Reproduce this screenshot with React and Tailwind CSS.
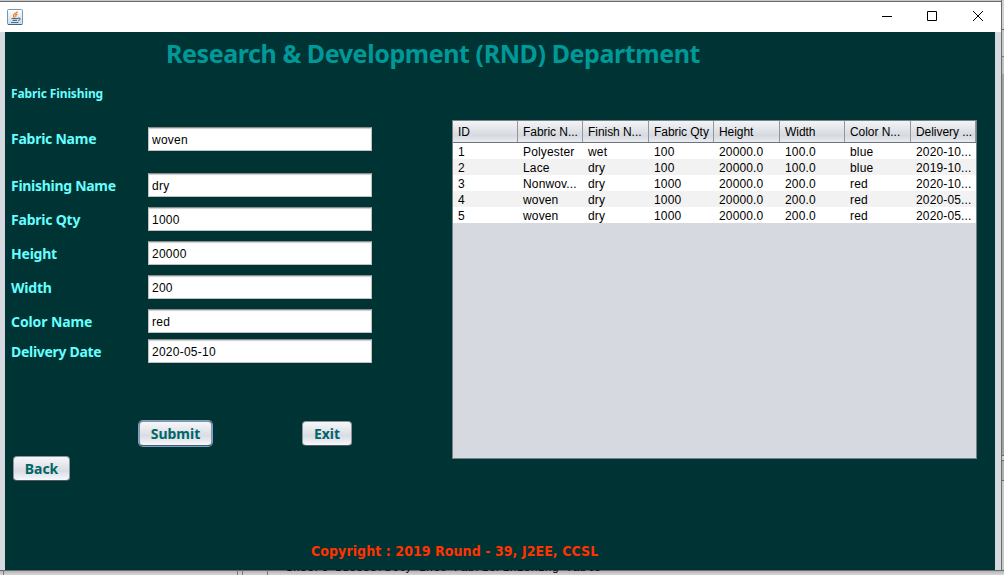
import React from "react";

const fields = [
  ["Fabric Name", "woven", "mt-0", "tracking-[-0.25px]"],
  ["Finishing Name", "dry", "mt-[22px]", "tracking-[-0.29px] pt-[2px]"],
  ["Fabric Qty", "1000", "mt-[10px]", "tracking-[-0.22px] pt-[2px]"],
  ["Height", "20000", "mt-[10px]", "tracking-[-0.22px] pt-[2px]"],
  ["Width", "200", "mt-[10px]", "tracking-[-0.2px] pt-[2px]"],
  ["Color Name", "red", "mt-[10px]", "tracking-[-0.1px] pt-[2px]"],
  ["Delivery Date", "2020-05-10", "mt-[6px]", "tracking-[-0.3px] pt-[2px]"],
];
const heads = ["ID", "Fabric N...", "Finish N...", "Fabric Qty", "Height", "Width", "Color N...", "Delivery ..."];
const rows = [
  ["1", "Polyester", "wet", "100", "20000.0", "100.0", "blue", "2020-10..."],
  ["2", "Lace", "dry", "100", "20000.0", "100.0", "blue", "2019-10..."],
  ["3", "Nonwov...", "dry", "1000", "20000.0", "200.0", "red", "2020-10..."],
  ["4", "woven", "dry", "1000", "20000.0", "200.0", "red", "2020-05..."],
  ["5", "woven", "dry", "1000", "20000.0", "200.0", "red", "2020-05..."],
];
const cols = "grid grid-cols-[65px_65px_66px_65px_66px_65px_66px_65px]";
const bold = "font-['Noto_Sans','Open_Sans',sans-serif] font-bold whitespace-nowrap";

function Button({ children, className }) {
  return (
    <button className={`${bold} flex items-center justify-center rounded-[4px] border border-[#8f9499] border-b-[#55595e] bg-linear-to-b from-[#f6f7f9] via-[#d9dce2] via-60% to-[#f5f8fd] text-[14px] leading-none text-[#006666] ${className}`}>
      {children}
    </button>
  );
}

function JavaIcon() {
  return (
    <svg width="16" height="16" viewBox="0 0 16 16" fill="none">
      <defs>
        <linearGradient id="tile" x1="0" y1="0" x2="0" y2="1">
          <stop offset="0" stopColor="#ffffff" />
          <stop offset="1" stopColor="#cdd9e4" />
        </linearGradient>
      </defs>
      <rect x=".5" y=".5" width="15" height="15" rx="1" fill="url(#tile)" stroke="#7c98b0" />
      <path d="M1 15.5h14" stroke="#45647f" />
      <path d="M10.500 2.500C10 4.300 6.300 4.800 6.500 6.800c.1.800.8 1.200 1 2M10.500 5.200C8.300 6 8.500 7 9 8" stroke="#e8832a" strokeWidth="1.300" />
      <path d="M4.500 9.500h6.500M5.500 11.400h4.500M4 13.500h7.500M11 9.300c2.800-.8 2.800 1.700 0 2.200" stroke="#44708f" strokeWidth="1.100" />
    </svg>
  );
}

export default function App() {
  return (
    <div className="relative flex h-[575px] w-[1004px] flex-col overflow-hidden bg-[#c8c8c8] font-['Liberation_Sans',Arial,sans-serif] text-black">
      <div className="flex h-[570px]">
        <div className="flex w-[1002px] flex-col border-r border-[#6b6b6b]">
          <div className="h-px shrink-0 bg-[#c8c8c8]" />
          <header className="flex h-[31px] shrink-0 items-center border-t border-[#6b6b6b] bg-white pl-[7px]">
            <div className="-mt-px"><JavaIcon /></div>
            <svg className="ml-auto mr-[16px]" width="104" height="14" viewBox="0 0 104 14" fill="none" stroke="#000">
              <path d="M1 6.500h10" />
              <path d="M46.500 1.500h9v9h-9z" />
              <path d="m92 1 10 10M102 1 92 11" />
            </svg>
          </header>
          <div className="flex h-[538px] border-x-[6px] border-l-[5px] border-[#d6d9df] bg-[#003333]">
            <main className="flex w-[990px] flex-col">
              <h1 className={`${bold} ml-[161px] mt-[8px] h-[28px] text-[25px] leading-[26px] tracking-[-0.41px] text-[#009999]`}>
                <span>Research &amp; Development (RND) Department</span>
              </h1>
              <div className="flex h-[413px]">
                <section className="w-[447px] pl-[6px] pt-[17px]">
                  <h2 className={`${bold} h-[16px] text-[12px] leading-[18px] tracking-[-0.12px] text-[#66ffff]`}><span>Fabric Finishing</span></h2>
                  <div className="mt-[26px]">
                    {fields.map(([label, value, gap, track]) => (
                      <div key={label} className={`flex h-[24px] items-center ${gap}`}>
                        <label className={`${bold} ${track} w-[137px] text-[14px] leading-[24px] text-[#66ffff]`}><span>{label}</span></label>
                        <input readOnly value={value} className="h-[24px] w-[224px] border border-[#c0c0c0] border-t-[#8c8c8c] bg-white px-[3px] pt-[2px] text-[12px] tracking-[0.25px] shadow-[inset_0_1px_1px_#cfcfcf] outline-none" />
                      </div>
                    ))}
                  </div>
                  <div className="mt-[58px] flex h-[25px] items-center">
                    <Button className="ml-[128px] h-[25px] w-[73px] shadow-[0_0_0_1px_#73a4d1]">Submit</Button>
                    <Button className="ml-[90px] h-[25px] w-[50px]">Exit</Button>
                  </div>
                  <Button className="ml-[2px] mt-[10px] h-[25px] w-[57px]">Back</Button>
                </section>
                <section className="mt-[52px] h-[339px] w-[525px] border border-[#7b7f86] bg-[#d6d9df] text-[12px]">
                  <div className={`${cols} h-[22px] border-b border-[#6f737a] bg-linear-to-b from-[#f3f4f6] via-[#d6d9df] via-70% to-[#e9ecf1]`}>
                    {heads.map((h) => <div key={h} className="h-[21px] border-r border-[#93979d] pl-[5px] leading-[23px] tracking-[-0.05px] whitespace-nowrap">{h}</div>)}
                  </div>
                  {rows.map((r) => (
                    <div key={r[0]} className={`${cols} h-[16px] leading-[19px] even:bg-white odd:bg-[#f2f2f2]`}>
                      {r.map((c, i) => <div key={i} className="h-[16px] pl-[5px] tracking-[0.15px] whitespace-nowrap">{c}</div>)}
                    </div>
                  ))}
                </section>
              </div>
              <footer className="ml-[306px] mt-[60px] font-['DejaVu_Sans_Condensed','DejaVu_Sans',sans-serif] text-[14px] leading-[20px] font-bold tracking-[0.07px] whitespace-nowrap text-[#ff3300] [font-stretch:condensed]">
                <span>Copyright : 2019 Round - 39, J2EE, CCSL</span>
              </footer>
            </main>
          </div>
        </div>
        <div className="w-[2px]">
          <div className="h-[30px] border-b border-[#6b6b6b] bg-[#d0d0d0]" />
          <div className="h-[27px] border-b border-[#6d8392] bg-[#c8c8c8]" />
          <div className="h-[17px] bg-[#c0c0c0]" />
          <div className="h-[381px] bg-[#a3a3a3]" />
          <div className="h-[5px] border-t border-[#6b6b6b] bg-[#d0d0d0]" />
          <div className="h-[21px] border-y border-[#6b6b6b] bg-[#b0b0b0]" />
        </div>
      </div>
      <div className="flex h-[5px] overflow-hidden bg-[linear-gradient(#6b6b6b_1px,#b5b5b5_1px,#d6d6d6)]">
        <div className="w-[4px] border-r border-[#777]" />
        <div className="w-[234px] border-r border-[#777]" />
        <div className="w-[5px] border-r border-[#777]" />
        <div className="w-[25px] border-r border-[#777]" />
        <div className="-mt-[8px] ml-[18px] h-[13px] font-['Liberation_Mono',monospace] text-[11.670px] leading-[13px] whitespace-pre">Insert Sucessfully into FabricFinishing Table</div>
      </div>
    </div>
  );
}
